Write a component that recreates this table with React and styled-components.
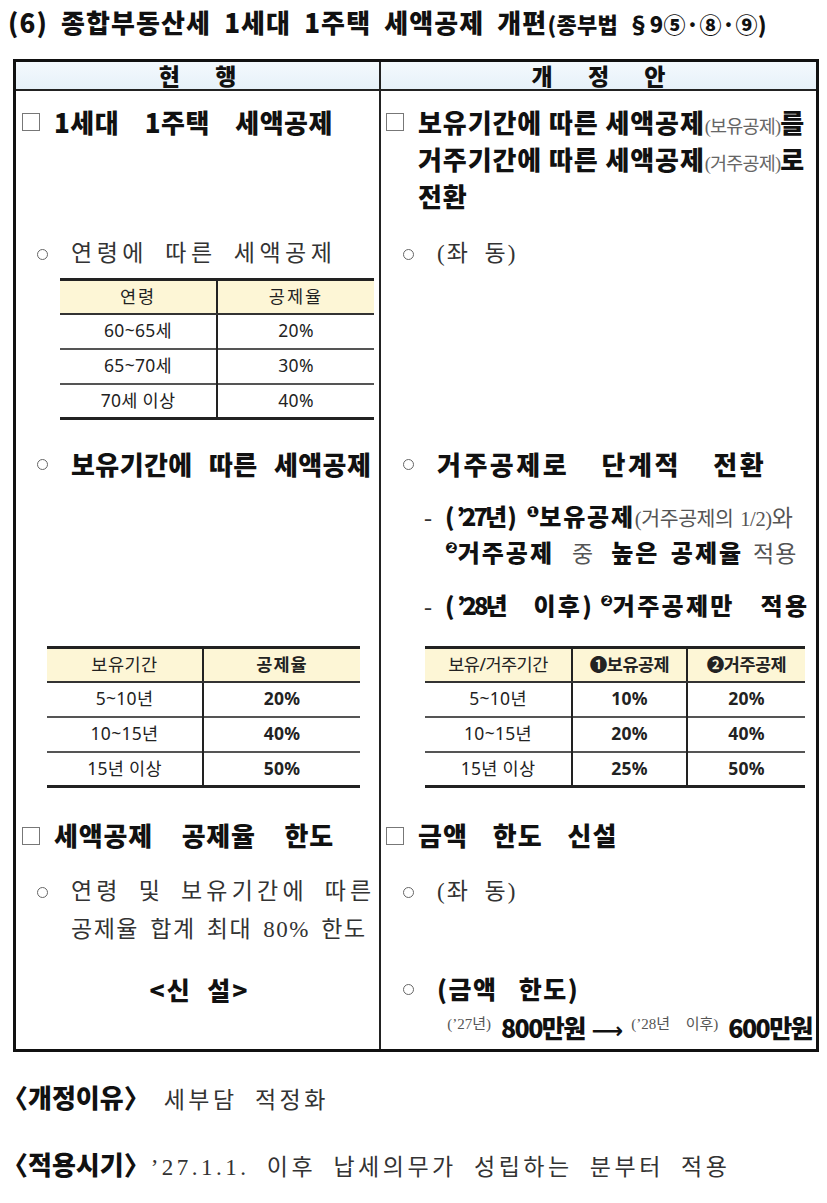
import React from "react";
import styled, { createGlobalStyle } from "styled-components";

const SANS = `"Noto Sans CJK KR", "Noto Sans", sans-serif`;
const SERIF = `"Liberation Serif", "Noto Sans CJK KR", serif`;
const GOTHIC = `"Noto Sans", "Noto Sans CJK KR", sans-serif`;

const Global = createGlobalStyle`
  html, body { margin: 0; padding: 0; background: #fff; }
  body { font-family: ${SANS}; color: #111; }
  * { box-sizing: border-box; }
`;

const Page = styled.div`
  width: 827px;
  padding: 6px 0 0 0;
`;

const Title = styled.div`
  margin-left: 8px;
  height: 32px;
  font-family: ${SANS};
  font-weight: 900;
  font-size: 26px;
  line-height: 32px;
  letter-spacing: 1.1px;
  word-spacing: 6px;
  color: #111;
  white-space: nowrap;
  margin-bottom: 21px;
`;

const Small = styled.span`
  font-size: 22px;
  letter-spacing: 0.3px;
  word-spacing: 4px;
`;

const MainTable = styled.div`
  margin-left: 13px;
  width: 806px;
  border: 3px solid #111;
  display: grid;
  grid-template-columns: 365px 1fr;
`;

const HeadCell = styled.div`
  height: 29px;
  background: linear-gradient(#f4f9fd, #e6f1f9);
  border-bottom: 2px solid #222;
  border-right: ${(p) => (p.$left ? "2px solid #222" : "none")};
  display: flex;
  align-items: center;
  justify-content: center;
  font-weight: 900;
  font-size: 23px;
  line-height: 1;
  letter-spacing: 15px;
  text-indent: 15px;
`;

const Cell = styled.div`
  border-right: ${(p) => (p.$left ? "2px solid #222" : "none")};
  padding: ${(p) => p.$pad || "0"};
  padding-left: ${(p) => (p.$left ? "6px" : "5px")};
  padding-right: 2px;
  display: flex;
  flex-direction: column;
`;

const BoxHeading = styled.div`
  display: flex;
  align-items: flex-start;
  font-weight: 900;
  font-size: 26px;
  line-height: ${(p) => p.$lh || "37px"};
  letter-spacing: ${(p) => p.$ls || "0px"};
  word-spacing: ${(p) => p.$ws || "0px"};
  color: #111;
  white-space: nowrap;
`;

const CheckBox = styled.span`
  flex: none;
  display: inline-block;
  width: 18px;
  height: 18px;
  border: 1px solid #777;
  margin-top: 10px;
  margin-right: 14px;
`;

const Paren = styled.span`
  font-family: ${SERIF};
  font-weight: 400;
  font-size: 18.5px;
  line-height: 1;
  color: #666;
  letter-spacing: -0.8px;
  word-spacing: 0;
`;

const BulletLine = styled.div`
  display: flex;
  align-items: flex-start;
  padding-left: ${(p) => p.$indent || "15px"};
  margin-top: ${(p) => p.$mt || "0px"};
`;

const Circle = styled.span`
  flex: none;
  display: inline-block;
  width: 11px;
  height: 11px;
  border: 1.5px solid #666;
  border-radius: 50%;
  margin-top: ${(p) => p.$mt || "13px"};
  margin-right: ${(p) => p.$mr || "23px"};
`;

const SerifText = styled.div`
  font-family: ${SERIF};
  font-weight: 400;
  font-size: 23px;
  line-height: ${(p) => p.$lh || "36px"};
  letter-spacing: ${(p) => p.$ls || "4.5px"};
  word-spacing: ${(p) => p.$ws || "7px"};
  color: #333;
  white-space: nowrap;
`;

const SpacedLine = styled.div`
  letter-spacing: ${(p) => p.$ls};
  word-spacing: ${(p) => p.$ws};
`;

const BoldText = styled.div`
  font-weight: 900;
  font-size: ${(p) => p.$size || "26px"};
  line-height: 36px;
  letter-spacing: ${(p) => p.$ls || "0px"};
  word-spacing: ${(p) => p.$ws || "6px"};
  color: #111;
  white-space: nowrap;
`;

const NewMark = styled.div`
  text-align: center;
  font-weight: 900;
  font-size: 25px;
  line-height: 38px;
  letter-spacing: 2px;
  word-spacing: 8px;
  margin-top: 21px;
  color: #111;
`;

const DashLine = styled.div`
  height: ${(p) => p.$h || "36px"};
  white-space: nowrap;
  padding-left: ${(p) => p.$indent || "38px"};
  margin-top: ${(p) => p.$mt || "0px"};
  font-weight: 900;
  font-size: 24px;
  line-height: ${(p) => p.$h || "36px"};
  letter-spacing: ${(p) => p.$ls || "1px"};
  word-spacing: ${(p) => p.$ws || "2px"};
  color: #111;
  & > span { line-height: 1; }
`;

const Dash = styled.span`
  display: inline-block;
  width: 21px;
  font-family: ${SERIF};
  font-weight: 400;
  color: #333;
`;

const Sup = styled.span`
  font-family: "DejaVu Sans", sans-serif;
  font-size: 15px;
  letter-spacing: 0;
  vertical-align: 9px;
  margin: 0 0 0 ${(p) => p.$ml || "8px"};
`;

const Light = styled.span`
  font-family: ${SERIF};
  font-weight: 400;
  font-size: ${(p) => p.$size || "23px"};
  color: #555;
  letter-spacing: ${(p) => p.$ls || "0px"};
  margin: 0 ${(p) => p.$mx || "0px"};
`;

const Year = styled.span`
  letter-spacing: -3px;
  margin-right: 3px;
`;

const RateTable = styled.table`
  border-collapse: collapse;
  width: ${(p) => p.$w};
  margin-left: ${(p) => p.$ml || "0px"};
  margin-top: ${(p) => p.$mt || "0px"};
  font-family: ${GOTHIC};
  font-size: 17.5px;
  color: #222;
  border-top: 3px solid #222;
  border-bottom: 3px solid #222;
  table-layout: fixed;
`;

const Th = styled.th`
  background: #fdf6d6;
  height: 34px;
  padding: 0;
  font-weight: ${(p) => (p.$bold ? 700 : 400)};
  border-bottom: 2px solid #333;
  border-left: ${(p) => (p.$first ? "none" : "2px solid #222")};
  width: ${(p) => p.$w || "auto"};
  letter-spacing: ${(p) => p.$ls || "1px"};
  white-space: nowrap;
  line-height: 1;
`;

const Td = styled.td`
  height: 35px;
  padding: 0;
  text-align: center;
  font-weight: ${(p) => (p.$bold ? 700 : 400)};
  border-top: ${(p) => (p.$top ? "2px solid #555" : "none")};
  border-left: ${(p) => (p.$first ? "none" : "2px solid #222")};
  letter-spacing: 0.3px;
  white-space: nowrap;
  line-height: 1;
`;

const TableWrap = styled.div`
  display: flex;
  padding-top: 23px;
  padding-bottom: 29px;
`;

const AmountLine = styled.div`
  height: 36px;
  text-align: right;
  white-space: nowrap;
  margin-top: 3px;
  padding-right: 2px;
  font-weight: 900;
  font-size: 25px;
  line-height: 36px;
  letter-spacing: -1.6px;
  color: #111;
  & > span { line-height: 1; }
`;

const Tiny = styled.span`
  font-family: ${SERIF};
  font-weight: 400;
  font-size: 15px;
  color: #555;
  vertical-align: 9px;
  letter-spacing: 0px;
  word-spacing: 12px;
  margin: 0 ${(p) => p.$mr || "10px"} 0 0;
`;

const Arrow = styled.span`
  font-family: "DejaVu Sans", sans-serif;
  font-weight: 700;
  font-size: 22px;
  letter-spacing: 0;
  margin: 0 8px 0 7px;
`;

const FootLine = styled.div`
  height: 36px;
  margin-left: 2px;
  margin-top: ${(p) => p.$mt || "31px"};
  line-height: 36px;
  white-space: nowrap;
  & > span { line-height: 1; }
`;

const FootLabel = styled.span`
  font-weight: 900;
  font-size: 26px;
  letter-spacing: 0px;
  margin-right: 14px;
  color: #111;
`;

const FootText = styled.span`
  font-family: ${SERIF};
  font-size: 23px;
  letter-spacing: 3.5px;
  word-spacing: 8px;
  color: #333;
`;

const ageRows = [
  ["60~65세", "20%"],
  ["65~70세", "30%"],
  ["70세 이상", "40%"],
];

const holdRows = [
  ["5~10년", "20%"],
  ["10~15년", "40%"],
  ["15년 이상", "50%"],
];

const newRows = [
  ["5~10년", "10%", "20%"],
  ["10~15년", "20%", "40%"],
  ["15년 이상", "25%", "50%"],
];

export default function App() {
  return (
    <Page>
      <Global />
      <Title>
        (6) 종합부동산세 1세대 1주택 세액공제 개편<Small>(종부법 §9⑤·⑧·⑨)</Small>
      </Title>

      <MainTable>
        <HeadCell $left>현 행</HeadCell>
        <HeadCell>개 정 안</HeadCell>

        {/* Row: headings */}
        <Cell $left $pad="12px 0 22px 0">
          <BoxHeading $ws="19px" $ls="0.5px">
            <CheckBox />
            <span>1세대 1주택 세액공제</span>
          </BoxHeading>
        </Cell>
        <Cell $pad="12px 0 22px 0">
          <BoxHeading $ls="0.9px" $ws="0px">
            <CheckBox />
            <span>
              보유기간에 따른 세액공제<Paren>(보유공제)</Paren>를
              <br />
              거주기간에 따른 세액공제<Paren>(거주공제)</Paren>로
              <br />
              전환
            </span>
          </BoxHeading>
        </Cell>

        {/* Row: age */}
        <Cell $left $pad="0 0 24px 0">
          <BulletLine>
            <Circle />
            <SerifText>연령에 따른 세액공제</SerifText>
          </BulletLine>
          <RateTable $w="314px" $ml="38px" $mt="6px">
            <thead>
              <tr>
                <Th $first $w="157px" $ls="2px">연령</Th>
                <Th $ls="2px">공제율</Th>
              </tr>
            </thead>
            <tbody>
              {ageRows.map((r, i) => (
                <tr key={r[0]}>
                  <Td $first $top={i > 0}>{r[0]}</Td>
                  <Td $top={i > 0}>{r[1]}</Td>
                </tr>
              ))}
            </tbody>
          </RateTable>
        </Cell>
        <Cell>
          <BulletLine $indent="17px">
            <Circle />
            <SerifText $ls="2px">(좌 동)</SerifText>
          </BulletLine>
        </Cell>

        {/* Row: holding period */}
        <Cell $left $pad="2px 0 0 0">
          <BulletLine>
            <Circle />
            <BoldText $ws="10px" $ls="0.4px">보유기간에 따른 세액공제</BoldText>
          </BulletLine>
        </Cell>
        <Cell $pad="2px 0 0 0">
          <BulletLine $indent="17px">
            <Circle />
            <BoldText $ws="24px" $ls="2.5px">거주공제로 단계적 전환</BoldText>
          </BulletLine>
          <DashLine $mt="16px" $ls="1.8px">
            <Dash>-</Dash>
            <span>(<Year>’27년</Year>)</span>
            <Sup>❶</Sup>
            <span>보유공제</span>
            <Light $size="20.5px" $ls="-0.4px">(거주공제의 1/2)</Light>
            <Light>와</Light>
          </DashLine>
          <DashLine $indent="59px" $h="35px" $ls="2px" $ws="4px">
            <Sup $ml="0px">❷</Sup>
            <span>거주공제</span>
            <Light $mx="18px">중</Light>
            <span>높은 공제율</span>
            <Light $mx="10px" $ls="1px">적용</Light>
          </DashLine>
          <DashLine $mt="18px" $ws="18px" $ls="2.3px">
            <Dash>-</Dash>
            <span>(<Year>’28년</Year> 이후)</span>
            <Sup $ml="6px">❷</Sup>
            <span>거주공제만 적용</span>
          </DashLine>
        </Cell>

        {/* Row: tables */}
        <Cell $left>
          <TableWrap>
            <RateTable $w="313px" $ml="25px">
              <thead>
                <tr>
                  <Th $first $w="156px" $ls="0.5px">보유기간</Th>
                  <Th $bold>공제율</Th>
                </tr>
              </thead>
              <tbody>
                {holdRows.map((r, i) => (
                  <tr key={r[0]}>
                    <Td $first $top={i > 0}>{r[0]}</Td>
                    <Td $bold $top={i > 0}>{r[1]}</Td>
                  </tr>
                ))}
              </tbody>
            </RateTable>
          </TableWrap>
        </Cell>
        <Cell>
          <TableWrap>
            <RateTable $w="380px" $ml="39px">
              <thead>
                <tr>
                  <Th $first $w="147px" $ls="-0.5px">보유/거주기간</Th>
                  <Th $bold $w="115px" $ls="-0.5px">❶보유공제</Th>
                  <Th $bold $ls="-0.5px">❷거주공제</Th>
                </tr>
              </thead>
              <tbody>
                {newRows.map((r, i) => (
                  <tr key={r[0]}>
                    <Td $first $top={i > 0}>{r[0]}</Td>
                    <Td $bold $top={i > 0}>{r[1]}</Td>
                    <Td $bold $top={i > 0}>{r[2]}</Td>
                  </tr>
                ))}
              </tbody>
            </RateTable>
          </TableWrap>
        </Cell>

        {/* Row: limit headings */}
        <Cell $left>
          <BoxHeading $ws="22px" $ls="0.8px" $lh="36px">
            <CheckBox />
            <span>세액공제 공제율 한도</span>
          </BoxHeading>
        </Cell>
        <Cell>
          <BoxHeading $ws="18px" $ls="1px" $lh="36px">
            <CheckBox />
            <span>금액 한도 신설</span>
          </BoxHeading>
        </Cell>

        {/* Row: limit content */}
        <Cell $left $pad="20px 0 6px 0">
          <BulletLine>
            <Circle $mt="14px" />
            <SerifText $lh="38px">
              <SpacedLine $ls="4.2px" $ws="7px">연령 및 보유기간에 따른</SpacedLine>
              <SpacedLine $ls="1.5px" $ws="4px">공제율 합계 최대 80% 한도</SpacedLine>
            </SerifText>
          </BulletLine>
          <NewMark>&lt;신 설&gt;</NewMark>
        </Cell>
        <Cell $pad="20px 0 4px 0">
          <BulletLine $indent="17px">
            <Circle $mt="14px" />
            <SerifText $lh="38px" $ls="2px">(좌 동)</SerifText>
          </BulletLine>
          <BulletLine $indent="17px" $mt="59px">
            <Circle $mt="14px" />
            <BoldText $size="25px" $ws="14px" $ls="1.5px">
              (금액 한도)
            </BoldText>
          </BulletLine>
          <AmountLine>
            <Tiny>(’27년)</Tiny>
            <span>800만원</span>
            <Arrow>⟶</Arrow>
            <Tiny>(’28년 이후)</Tiny>
            <span>600만원</span>
          </AmountLine>
        </Cell>
      </MainTable>

      <FootLine $mt="31px">
        <FootLabel>〈개정이유〉</FootLabel>
        <FootText>세부담 적정화</FootText>
      </FootLine>
      <FootLine $mt="31px">
        <FootLabel>〈적용시기〉</FootLabel>
        <FootText>’27.1.1. 이후 납세의무가 성립하는 분부터 적용</FootText>
      </FootLine>
    </Page>
  );
}
